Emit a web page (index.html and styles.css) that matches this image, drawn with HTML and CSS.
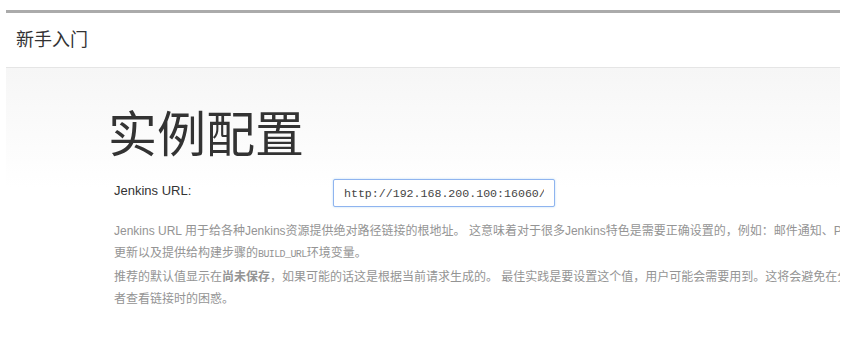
FILE: index.html
```html
<!DOCTYPE html>
<html lang="zh-CN">
<head>
    <meta charset="UTF-8">
    <meta name="viewport" content="width=device-width, initial-scale=1.0">
    <title>新手入门</title>
    <link rel="stylesheet" href="styles.css">
</head>
<body>
    <div class="dialog">
        <div class="dialog-header">新手入门</div>

        <div class="dialog-body">
            <h1>实例配置</h1>

            <div class="form-row">
                <label for="root-url">Jenkins URL:</label>
                <input type="text" id="root-url" value="http://192.168.200.100:16060/">
            </div>

            <div class="help">
                <p>Jenkins URL 用于给各种Jenkins资源提供绝对路径链接的根地址。 这意味着对于很多Jenkins特色是需要正确设置的，例如：邮件通知、PR状态更新以及提供给构建步骤的<code>BUILD_URL</code>环境变量。</p>
                <p>推荐的默认值显示在<strong>尚未保存</strong>，如果可能的话这是根据当前请求生成的。 最佳实践是要设置这个值，用户可能会需要用到。这将会避免在分享或者查看链接时的困惑。</p>
            </div>
        </div>
    </div>
</body>
</html>
```

FILE: styles.css
```css
body {
    margin: 0;
    padding: 0;
    background-color: #fff;
    font-family: "Liberation Sans", "Noto Sans CJK SC", sans-serif;
    color: #333;
}
.dialog {
    width: 834px;
    height: 335px;
    margin: 10px 0 0 6px;
    border-top: 3px solid #ababab;
    box-sizing: border-box;
    overflow: hidden;
    background-color: #fff;
}
.dialog-header {
    height: 54px;
    line-height: 54px;
    padding: 0 10px;
    font-size: 18px;
    border-bottom: 1px solid #e5e5e5;
}
.dialog-body {
    height: 100%;
    padding: 0 0 0 102px;
    background: linear-gradient(to bottom, #f6f6f6, #fff 120px);
}
h1 {
    margin: 0;
    padding-top: 39px;
    font-size: 49px;
    line-height: 56px;
    font-weight: normal;
    color: #333;
}
.form-row {
    display: flex;
    align-items: flex-start;
    margin-top: 16px;
    padding-left: 6px;
}
.form-row label {
    width: 219px;
    padding-top: 3px;
    font-size: 13px;
    line-height: 18px;
}
.form-row input {
    width: 222px;
    height: 28px;
    box-sizing: border-box;
    margin: 0;
    padding: 0 10px;
    border: 1px solid #8fb4ef;
    border-radius: 2px;
    box-shadow: 0 0 2px rgba(102, 175, 233, 0.5);
    font-family: "Liberation Mono", monospace;
    font-size: 11.6px;
    color: #444;
    background-color: #fff;
    outline: none;
}
.help {
    width: 766px;
    margin-top: 13px;
    padding-left: 6px;
    font-size: 12px;
    line-height: 22px;
    color: #949494;
}
.help p {
    margin: 0;
}
.help code {
    font-family: "Liberation Mono", monospace;
    font-size: 10px;
    letter-spacing: -0.6px;
}
.help strong {
    font-weight: bold;
    color: inherit;
}
```
